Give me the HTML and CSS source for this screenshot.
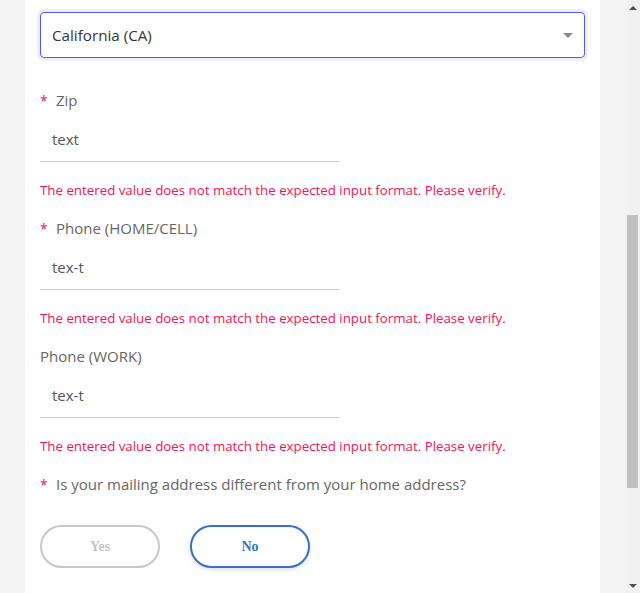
FILE: index.html
```html
<!DOCTYPE html>
<html lang="en">
<head>
<meta charset="utf-8">
<title>Contact details</title>
<link rel="stylesheet" href="styles.css">
</head>
<body>
<div class="window">
  <div class="page">
    <main class="panel">
      <div class="field state">
        <div class="select">
          <span>California (CA)</span>
          <span class="caret"></span>
        </div>
      </div>

      <div class="field">
        <label class="label"><span class="req">*</span>Zip</label>
        <div class="input">text</div>
        <p class="error">The entered value does not match the expected input format. Please verify.</p>
      </div>
      <div class="field">
        <label class="label"><span class="req">*</span>Phone (HOME/CELL)</label>
        <div class="input">tex-t</div>
        <p class="error">The entered value does not match the expected input format. Please verify.</p>
      </div>
      <div class="field">
        <label class="label">Phone (WORK)</label>
        <div class="input">tex-t</div>
        <p class="error">The entered value does not match the expected input format. Please verify.</p>
      </div>
      <div class="question">
        <label class="label"><span class="req">*</span>Is your mailing address different from your home address?</label>
        <div class="choices">
          <button class="choice choice-off" type="button">Yes</button>
          <button class="choice choice-on" type="button">No</button>
        </div>
      </div>
    </main>
  </div>
  <div class="scrollbar">
    <span class="arrow arrow-up"></span>
    <div class="track">
      <div class="thumb" style="margin-top: 200px; height: 273px;"></div>
    </div>
    <span class="arrow arrow-down"></span>
  </div>
</div>
</body>
</html>
```
FILE: styles.css
```css
html, body {
  margin: 0;
  padding: 0;
}
body {
  background: #f4f4f4;
  font-family: "Open Sans", Lato, sans-serif;
  color: #666;
}
.window {
  display: flex;
  height: 593px;
  overflow: hidden;
}
.page {
  flex: 1;
  background: #f4f4f4;
  display: flex;
}
.panel {
  flex: 1;
  margin: 0 25px;
  background: #fff;
  padding: 12px 15px 0;
}
.field {
  display: flex;
  flex-direction: column;
  align-items: flex-start;
  margin-bottom: 19px;
}
.field.state {
  margin-bottom: 32px;
  align-items: stretch;
}
.label {
  display: flex;
  align-items: center;
  height: 20px;
  font-size: 15px;
  color: #666;
}
.req {
  color: #f0145a;
  width: 16px;
  font-size: 14px;
}
.input {
  margin-top: 8px;
  box-sizing: border-box;
  width: 300px;
  height: 44px;
  padding: 0 12px 1px;
  display: flex;
  align-items: center;
  border-bottom: 1px solid #cfcfcf;
  font-size: 15px;
  color: #555;
}
.select {
  box-sizing: border-box;
  height: 46px;
  padding: 0 11px;
  display: flex;
  align-items: center;
  justify-content: space-between;
  border: 1.5px solid #5158f5;
  border-radius: 4px;
  box-shadow: 0 0 0 3px #ededff;
  font-size: 15.2px;
  color: #333;
}
.caret {
  width: 0;
  height: 0;
  border-left: 5px solid transparent;
  border-right: 5px solid transparent;
  border-top: 5px solid #8c8c8c;
}
.error {
  margin: 19px 0 0;
  height: 18px;
  line-height: 18px;
  font-size: 13.3px;
  color: #f0145a;
}
.question .label {
  margin-bottom: 31px;
}
.choices {
  display: flex;
  gap: 30px;
}
.choice {
  width: 120px;
  height: 43px;
  border-radius: 22px;
  background: #fff;
  font-family: "Liberation Serif", serif;
  font-weight: bold;
  font-size: 14px;
  cursor: pointer;
}
.choice-off {
  border: 2px solid #c8c8c8;
  color: #c4c4c4;
}
.choice-on {
  border: 2px solid #3a6fc4;
  color: #3a6fc4;
  box-shadow: 0 2px 4px rgba(0, 0, 0, 0.12);
}
.scrollbar {
  width: 15px;
  flex: none;
  background: #f1f1f1;
  display: flex;
  flex-direction: column;
  align-items: center;
}
.arrow {
  flex: none;
  height: 15px;
  width: 15px;
  display: flex;
  align-items: center;
  justify-content: center;
}
.arrow::before {
  content: "";
  width: 0;
  height: 0;
  border-left: 4px solid transparent;
  border-right: 4px solid transparent;
}
.arrow-up::before {
  border-bottom: 4px solid #505050;
}
.arrow-down::before {
  border-top: 4px solid #505050;
}
.track {
  flex: 1;
  width: 100%;
  display: flex;
  flex-direction: column;
  align-items: center;
}
.thumb {
  width: 11px;
  background: #c1c1c1;
}
```
